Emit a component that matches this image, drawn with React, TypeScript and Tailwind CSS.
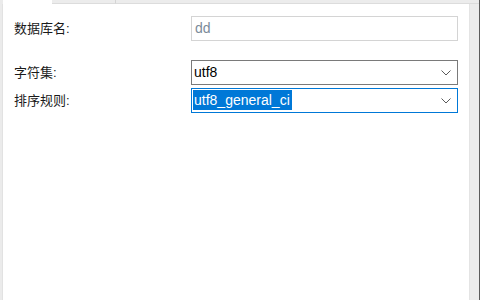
import { ReactNode } from "react";

function Chevron() {
  return (
    <svg width="10" height="6" viewBox="0 0 10 6" className="mr-[6px] shrink-0">
      <path d="M0.5 0.5 L5 5 L9.5 0.5" fill="none" stroke="#5a5a5a" strokeWidth="1" />
    </svg>
  );
}

function Row({ label, children, className = "" }: { label: string; children: ReactNode; className?: string }) {
  return (
    <div className={`flex items-center ${className}`}>
      <div className="w-[177px] text-[13px] text-[#1a1a1a]">{label}</div>
      {children}
    </div>
  );
}

export default function App() {
  return (
    <div
      className="w-[480px] h-[300px] flex flex-col bg-[#ececec] overflow-hidden"
      style={{ fontFamily: '"Liberation Sans", "Noto Sans CJK SC", sans-serif' }}
    >
      {/* tab strip edge */}
      <div className="h-[4px] flex shrink-0">
        <div className="w-[3px] bg-[#ebebeb]" />
        <div className="w-[49px] bg-white" />
        <div className="w-[64px] bg-[#ececec] border-b border-[#dcdcdc] border-r border-r-[#d4d4d4]" />
        <div className="flex-1 bg-[#ececec] border-b border-[#dcdcdc]" />
        <div className="w-[1px] bg-[#5c5c5c]" />
      </div>

      <div className="flex flex-1">
        <div className="w-[3px] bg-[#ebebeb] border-r border-[#e2e2e2]" />
        <div className="flex-1 bg-white pl-[11px] pt-[12px] border-r border-[#e4e4e4]">
          <Row label="数据库名:">
            <div className="w-[267px] h-[25px] border border-[#d4d4d4] flex items-center px-[3px] text-[14px] text-[#7b8b9a]">
              dd
            </div>
          </Row>
          <Row label="字符集:" className="mt-[19px]">
            <div className="w-[267px] h-[25px] border border-[#7a7a7a] flex items-center pl-[2px] text-[14px] text-black">
              <span className="flex-1">utf8</span>
              <Chevron />
            </div>
          </Row>
          <Row label="排序规则:" className="mt-[3px]">
            <div className="w-[267px] h-[25px] border border-[#0078d7] flex items-center pl-[1px] text-[14px]">
              <span className="flex-1">
                <span className="bg-[#0078d7] text-white inline-block leading-[20px] pr-[2px] pl-[1px]">utf8_general_ci</span>
              </span>
              <Chevron />
            </div>
          </Row>
        </div>
        <div className="w-[9px] bg-[#ececec]" />
        <div className="w-[1px] bg-[#5c5c5c]" />
      </div>
    </div>
  );
}
